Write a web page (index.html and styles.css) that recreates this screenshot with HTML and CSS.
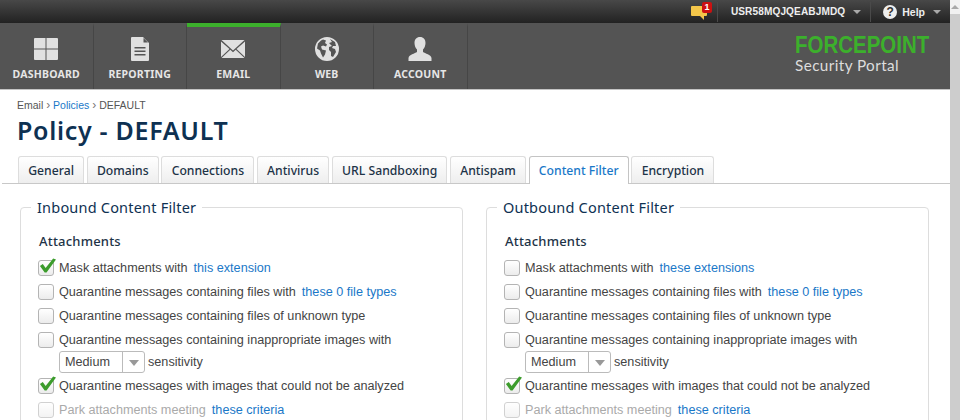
FILE: index.html
```html
<!DOCTYPE html>
<html lang="en">
<head>
<meta charset="utf-8">
<title>Policy - DEFAULT</title>
<link rel="stylesheet" href="styles.css">
</head>
<body>
<div class="page">
  <div class="main">
    <header class="topbar">
      <div class="notif">
        <svg width="16" height="15" viewBox="0 0 16 15"><path class="bubble" d="M1 1h14a1 1 0 0 1 1 1v8a1 1 0 0 1-1 1h-2v4l-4-4H1a1 1 0 0 1-1-1V2a1 1 0 0 1 1-1z"/></svg>
        <span class="badge">1</span>
      </div>
      <div class="user">USR58MQJQEABJMDQ<span class="caret"></span></div>
      <div class="help">
        <span class="help-icon">?</span>Help<span class="caret"></span>
      </div>
    </header>
    <nav class="nav">
      <a class="nav-item">
        <svg class="nav-icon" viewBox="0 0 24 24"><path d="M1 1h10.500v10.500H0V2a1 1 0 0 1 1-1zM12.500 1H23a1 1 0 0 1 1 1v9.500H12.500zM0 12.500h11.500V23H1a1 1 0 0 1-1-1zM12.500 12.500H24V22a1 1 0 0 1-1 1H12.500z"/></svg>
        <span>DASHBOARD</span>
      </a>
      <a class="nav-item">
        <svg class="nav-icon" viewBox="0 0 24 24"><path fill-rule="evenodd" d="M4 0h11l6 6v17a1 1 0 0 1-1 1H4a1 1 0 0 1-1-1V1a1 1 0 0 1 1-1zM15.500 1v4.500H20zM6.500 10v1.500h11V10zM6.500 13.500V15h11v-1.500zM6.500 17v1.500h11V17z"/></svg>
        <span>REPORTING</span>
      </a>
      <a class="nav-item active">
        <svg class="nav-icon" viewBox="0 0 24 24"><path d="M.5 3h23L12 13.500zM0 4.500l8.500 7.500L0 20zM24 4.500L15.500 12 24 20zM9.300 12.800l2.700 2.400 2.700-2.400L23.500 21H.5z"/></svg>
        <span>EMAIL</span>
      </a>
      <a class="nav-item">
        <svg class="nav-icon" viewBox="0 0 24 24"><path fill-rule="evenodd" d="M12 0a12 12 0 1 0 0 24 12 12 0 0 0 0-24zM8 2.500l3 1-1 2.500 2 1.500-1 2-3-1-2 1 1 3 4 1-1 4-2 3-2-4-1-3-3-2 1-5 3-3zM15 2l5 3 1 4-3 0-1 2 3 1 1 3-3 5-2-1v-4l-2-2v-3l3-1-3-3 3-1z"/></svg>
        <span>WEB</span>
      </a>
      <a class="nav-item">
        <svg class="nav-icon" viewBox="0 0 24 24"><path d="M12 0c3.500 0 5.500 2.500 5.500 6 0 2.500-1 5-2.500 6.500v2.500c2 1.500 8 2.500 8.500 6V24H.5v-3c.5-3.500 6.500-4.500 8.500-6v-2.500C7.500 11 6.500 8.500 6.500 6 6.500 2.500 8.500 0 12 0z"/></svg>
        <span>ACCOUNT</span>
      </a>
      <div class="brand">
        <div class="brand-name">FORCEPOINT</div>
        <div class="brand-sub">Security Portal</div>
      </div>
    </nav>
    <main class="content">
      <div class="crumbs">Email <span class="sep">›</span> <a class="link">Policies</a> <span class="sep">›</span> DEFAULT</div>
      <h1 class="title">Policy - DEFAULT</h1>
      <div class="tabs">
        <a class="tab">General</a>
        <a class="tab">Domains</a>
        <a class="tab">Connections</a>
        <a class="tab">Antivirus</a>
        <a class="tab">URL Sandboxing</a>
        <a class="tab">Antispam</a>
        <a class="tab current">Content Filter</a>
        <a class="tab">Encryption</a>
      </div>
      <div class="columns">
        <fieldset class="panel">
          <legend>Inbound Content Filter</legend>
          <h2 class="section">Attachments</h2>
          <div class="row"><span class="check on"><svg viewBox="0 0 18 16"><path d="M1 8l3-2 3 4 8-10 3 1-10 14H6z"/></svg></span>Mask attachments with <a class="link gap">this extension</a></div>
          <div class="row"><span class="check"></span>Quarantine messages containing files with <a class="link gap">these 0 file types</a></div>
          <div class="row"><span class="check"></span>Quarantine messages containing files of unknown type</div>
          <div class="row"><span class="check"></span>Quarantine messages containing inappropriate images with</div>
          <div class="sens"><span class="select"><span class="select-val">Medium</span><span class="select-btn"></span></span>sensitivity</div>
          <div class="row"><span class="check on"><svg viewBox="0 0 18 16"><path d="M1 8l3-2 3 4 8-10 3 1-10 14H6z"/></svg></span>Quarantine messages with images that could not be analyzed</div>
          <div class="row off"><span class="check"></span>Park attachments meeting <a class="link gap">these criteria</a></div>
        </fieldset>
        <fieldset class="panel">
          <legend>Outbound Content Filter</legend>
          <h2 class="section">Attachments</h2>
          <div class="row"><span class="check"></span>Mask attachments with <a class="link gap">these extensions</a></div>
          <div class="row"><span class="check"></span>Quarantine messages containing files with <a class="link gap">these 0 file types</a></div>
          <div class="row"><span class="check"></span>Quarantine messages containing files of unknown type</div>
          <div class="row"><span class="check"></span>Quarantine messages containing inappropriate images with</div>
          <div class="sens"><span class="select"><span class="select-val">Medium</span><span class="select-btn"></span></span>sensitivity</div>
          <div class="row"><span class="check on"><svg viewBox="0 0 18 16"><path d="M1 8l3-2 3 4 8-10 3 1-10 14H6z"/></svg></span>Quarantine messages with images that could not be analyzed</div>
          <div class="row off"><span class="check"></span>Park attachments meeting <a class="link gap">these criteria</a></div>
        </fieldset>
      </div>
    </main>
  </div>
  <aside class="scrollbar"><span class="scroll-up"></span></aside>
</div>
</body>
</html>
```
FILE: styles.css
```css
* { box-sizing: border-box; }
html, body { margin: 0; height: 420px; overflow: hidden; background: #fff; }
body { font-family: "Liberation Sans", Arial, sans-serif; font-size: 12.650px; color: #444; }
.page { display: flex; height: 420px; overflow: hidden; }
.main { flex: 1; min-width: 0; }
.scrollbar { width: 10px; background: #cdcdcd; }
.scroll-up { display: block; height: 14px; background: #f1f1f1; position: relative; }
.scroll-up::after { content: ""; position: absolute; left: 1px; top: 5px; border: 4px solid transparent; border-top: 0; border-bottom: 4px solid #a8a8a8; }

.topbar { height: 23px; background: linear-gradient(#484848, #222); display: flex; justify-content: flex-end; align-items: center; color: #eee; font-weight: bold; font-size: 10.500px; }
.notif { position: relative; width: 16px; height: 15px; margin-right: 10px; margin-top: 1px; }
.notif svg { display: block; }
.bubble { fill: #f4c64a; }
.badge { position: absolute; right: -5px; top: -3px; width: 10px; height: 11px; line-height: 11px; border-radius: 2px; background: #c11; color: #fff; font-size: 9px; text-align: center; }
.user { display: flex; align-items: center; height: 20px; padding: 0 9px 0 13px; border-left: 1px solid #4a4a4a; border-right: 1px solid #4a4a4a; font-size: 10.100px; letter-spacing: .1px; }
.help { display: flex; align-items: center; height: 20px; padding-left: 12px; padding-right: 9px; }
.help-icon { width: 14px; height: 14px; margin-right: 5px; border-radius: 50%; background: #eee; color: #333; font-size: 12px; line-height: 14px; text-align: center; }
.caret { margin-left: 8px; border: 4px solid transparent; border-bottom: 0; border-top: 4px solid #aaa; }

.nav { height: 67px; background: #545454; border-bottom: 1px solid #c4c4c4; display: flex; }
.nav-item { width: 93.500px; height: 66px; border-right: 1px solid #464646; border-top: 4px solid transparent; display: flex; flex-direction: column; align-items: center; color: #e6e6e6; font-family: "Noto Sans", sans-serif; font-weight: bold; font-size: 10.500px; letter-spacing: .2px; }
.nav-item span { margin-top: 6px; line-height: 14px; }
.nav-item.active { border-top-color: #3cb02c; }
.nav-icon { width: 24px; height: 24px; margin-top: 10px; fill: #e0e0e0; }
.brand { flex: none; width: 134px; margin-left: auto; margin-right: 21px; padding-top: 12px; }
.brand-name { font-weight: bold; font-size: 23px; line-height: 20px; color: #3cb02c; white-space: nowrap; transform: scaleX(.89); transform-origin: left center; }
.brand-sub { margin-top: 1px; font-family: "Lato", sans-serif; font-size: 15.300px; line-height: 18px; color: #ddd; letter-spacing: .4px; white-space: nowrap; }

.content { padding: 0; }
.crumbs { padding: 9px 0 0 17px; font-size: 10.500px; line-height: 13px; color: #555; }
.sep { color: #777; font-size: 12px; }
.link { color: #1a78c8; }
.title { margin: 2px 0 0 17px; font-family: "Noto Sans", sans-serif; font-weight: 600; font-size: 25px; line-height: 32px; color: #0e3152; letter-spacing: .7px; }
.tabs { display: flex; gap: 2.500px; margin: 10px 0 0 2px; padding-left: 16px; border-bottom: 1px solid #c8c8c8; height: 28px; }
.tab { height: 27px; padding: 0 9.250px; border: 1px solid #ddd; border-bottom: 0; border-radius: 3px 3px 0 0; background: linear-gradient(#fff, #eee); font-family: "Noto Sans", sans-serif; font-weight: 500; font-size: 12.200px; line-height: 28px; color: #1d3347; white-space: nowrap; }
.tab.current { height: 28px; background: #fff; border-color: #c4c4c4; color: #1a78c8; }

.columns { display: flex; gap: 23px; padding: 13px 21px 0 20px; }
.panel { flex: 1; min-width: 0; margin: 0; padding: 0 0 40px 17px; border: 1px solid #ddd; border-radius: 4px; }
.panel legend { margin-left: -7px; padding: 0 6px; font-family: "Noto Sans", sans-serif; font-size: 14.500px; line-height: 20px; color: #0e3152; letter-spacing: .2px; }
.section { margin: 15px 0 6px 1px; font-family: "Noto Sans", sans-serif; font-weight: 500; font-size: 13px; line-height: 18px; color: #1d3347; letter-spacing: .2px; }
.row { display: flex; align-items: center; height: 24px; white-space: pre; }
.check { flex: none; width: 16px; height: 16px; margin-right: 5px; border: 1px solid #b4b4b4; border-radius: 3px; background: linear-gradient(#fff, #ececec); position: relative; }
.check svg { position: absolute; left: 0; top: -3px; width: 17px; height: 16px; fill: #3c9c2c; }
.gap { margin-left: 2.500px; }
.off { color: #aaa; }
.off .check { opacity: .6; }
.sens { display: flex; align-items: center; height: 22px; margin: -1px 0 1px 21px; }
.select { display: flex; width: 86px; height: 22px; margin-right: 3px; border: 1px solid #bbb; border-radius: 3px; }
.select-val { flex: 1; padding-left: 5px; line-height: 21px; }
.select-btn { width: 22px; border-left: 1px solid #bbb; position: relative; }
.select-btn::after { content: ""; position: absolute; left: 6px; top: 8px; border: 5px solid transparent; border-bottom: 0; border-top: 6px solid #999; }
```
